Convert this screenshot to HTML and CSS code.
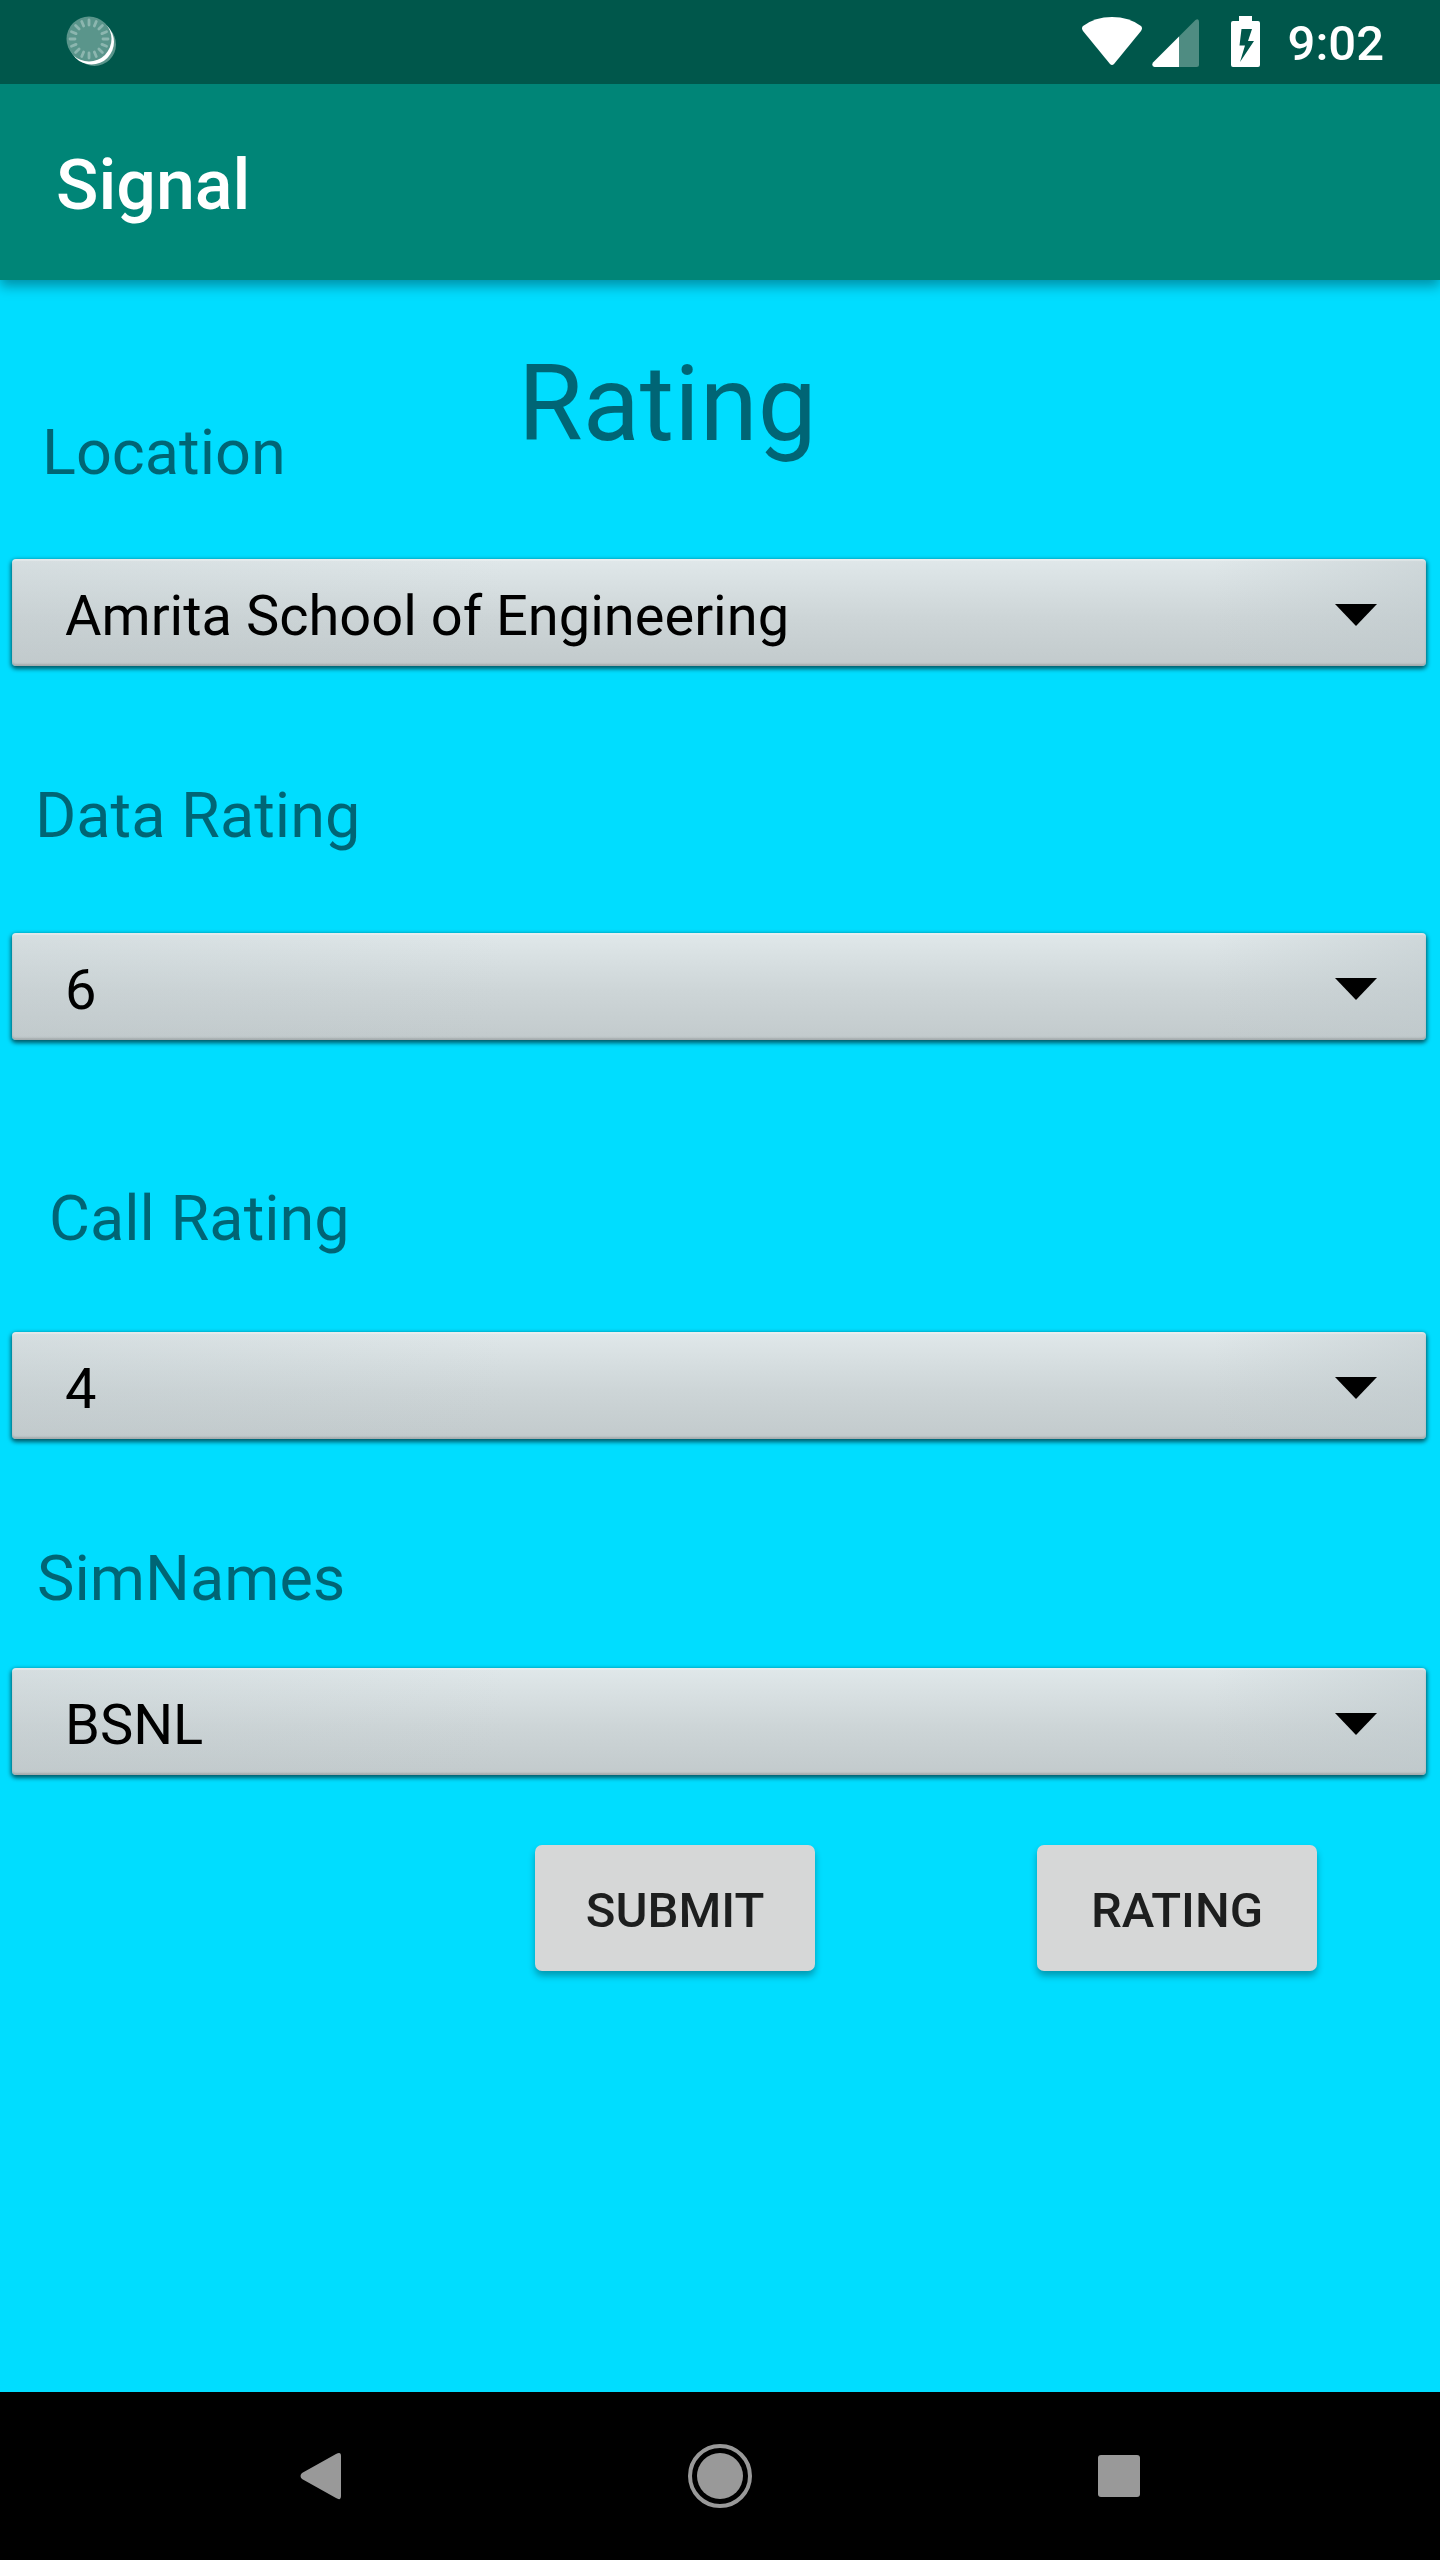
FILE: index.html
```html
<!DOCTYPE html>
<html lang="en">
<head>
<meta charset="utf-8">
<meta name="viewport" content="width=device-width, initial-scale=1">
<title>Signal</title>
<link rel="stylesheet" href="styles.css">
</head>
<body>
<div class="status-bar">
  <svg class="sync-icon" width="52" height="52" viewBox="0 0 52 52" aria-hidden="true">
    <circle cx="28.500" cy="28.500" r="21.500" fill="#5a958b"/>
    <circle cx="25.500" cy="26" r="22.500" fill="#fff"/>
    <circle cx="23" cy="23" r="22.500" fill="#5a958b"/>
    <g stroke="#8cb6af" stroke-width="2.800" stroke-linecap="round">
      <path id="tick" d="M23 4v5M23 37v5M4 23h5M37 23h5"/>
      <use href="#tick" transform="rotate(22.500 23 23)"/>
      <use href="#tick" transform="rotate(45 23 23)"/>
      <use href="#tick" transform="rotate(67.500 23 23)"/>
    </g>
  </svg>
  <div class="status-right">
    <svg class="wifi-icon" width="60" height="52" viewBox="0 0 60 52" aria-hidden="true">
      <path d="M1 10Q13 1 30 1T59 10Q61 12 59 15L32 48Q30 50 28 48L1 15Q-1 12 1 10Z" fill="#fff"/>
    </svg>
    <svg class="cell-icon" width="48" height="52" viewBox="0 0 48 52" aria-hidden="true">
      <path d="M27 20.500L43.500 4Q47 2 47 6V48.500Q47 51 44.500 51H27Z" fill="#4f8c82"/>
      <path d="M27 20.500V51H2.500Q-1 50 1 46.500Z" fill="#fff"/>
    </svg>
    <svg class="battery-icon" width="29" height="52" viewBox="0 0 29 52" aria-hidden="true">
      <path fill-rule="evenodd" d="M8 0H21V5H27Q29 5 29 7V49Q29 51 27 51H2Q0 51 0 49V7Q0 5 2 5H8ZM10.500 13L8.500 29.500H14L9 46L23 25H17L21 13Z" fill="#fff"/>
    </svg>
    <span class="clock">9:02</span>
  </div>
</div>

<header class="app-bar">
  <h1 class="app-title">Signal</h1>
</header>

<main class="content">
  <form class="rating-form">
    <div class="intro">
      <label class="label label-location" for="location">Location</label>
      <h2 class="heading">Rating</h2>
    </div>
    <div class="spinner">
      <select id="location"><option>Amrita School of Engineering</option></select>
      <svg class="arrow" width="42" height="22" viewBox="0 0 42 22" aria-hidden="true"><path d="M0 0H42L21 22Z"/></svg>
    </div>

    <label class="label label-data" for="data">Data Rating</label>
    <div class="spinner">
      <select id="data"><option>6</option></select>
      <svg class="arrow" width="42" height="22" viewBox="0 0 42 22" aria-hidden="true"><path d="M0 0H42L21 22Z"/></svg>
    </div>

    <label class="label label-call" for="call">Call Rating</label>
    <div class="spinner">
      <select id="call"><option>4</option></select>
      <svg class="arrow" width="42" height="22" viewBox="0 0 42 22" aria-hidden="true"><path d="M0 0H42L21 22Z"/></svg>
    </div>

    <label class="label label-sim" for="sim">SimNames</label>
    <div class="spinner">
      <select id="sim"><option>BSNL</option></select>
      <svg class="arrow" width="42" height="22" viewBox="0 0 42 22" aria-hidden="true"><path d="M0 0H42L21 22Z"/></svg>
    </div>

    <div class="actions">
      <button class="action" type="submit">SUBMIT</button>
      <button class="action" type="button">RATING</button>
    </div>
  </form>
</main>

<nav class="nav-bar">
  <button class="nav-button" type="button" aria-label="Back">
    <svg width="42" height="48" viewBox="0 0 42 48" aria-hidden="true"><path d="M2 21L36 2Q41 -1 41 4V44Q41 49 36 46L2 27Q-1 24 2 21Z" fill="#999"/></svg>
  </button>
  <button class="nav-button" type="button" aria-label="Home">
    <svg width="64" height="64" viewBox="0 0 64 64" aria-hidden="true"><circle cx="32" cy="32" r="30" fill="none" stroke="#999" stroke-width="4"/><circle cx="32" cy="32" r="23" fill="#999"/></svg>
  </button>
  <button class="nav-button" type="button" aria-label="Recent apps">
    <svg width="42" height="42" viewBox="0 0 42 42" aria-hidden="true"><rect width="42" height="42" rx="3" fill="#999"/></svg>
  </button>
</nav>
</body>
</html>
```
FILE: styles.css
```css
* {
  box-sizing: border-box;
}

body {
  margin: 0;
  min-height: 100vh;
  display: flex;
  flex-direction: column;
  background: #00ddff;
  font-family: Roboto, "Liberation Sans", sans-serif;
}

svg {
  display: block;
  flex: none;
}

h1,
h2 {
  margin: 0;
}

.status-bar {
  display: flex;
  justify-content: space-between;
  align-items: center;
  height: 84px;
  padding: 0 56px 0 66px;
  background: #00574b;
  color: #fff;
}

.status-right {
  display: flex;
  align-items: center;
}

.cell-icon {
  margin-left: 10px;
}

.battery-icon {
  margin: 0 28px 0 31px;
}

.clock {
  padding-top: 4px;
  font-size: 49px;
  font-weight: 500;
  line-height: 60px;
}

.app-bar {
  display: flex;
  align-items: center;
  min-height: 196px;
  padding: 6px 56px 0;
  background: #008577;
  box-shadow: 0 6px 12px rgba(0, 0, 0, 0.35);
  clip-path: inset(0 0 -24px 0);
}

.app-title {
  color: #fff;
  font-size: 70px;
  font-weight: 500;
  line-height: 84px;
}

.content {
  flex: 1;
  padding: 55px 14px 70px 12px;
}

.rating-form {
  display: flex;
  flex-direction: column;
}

.intro {
  display: grid;
  grid-template-columns: 506px 1fr;
  margin-bottom: 64px;
}

.heading {
  color: rgba(0, 0, 0, 0.54);
  font-size: 105px;
  font-weight: 400;
  line-height: 140px;
}

.label {
  color: rgba(0, 0, 0, 0.54);
  font-size: 63px;
  line-height: 84px;
}

.label-location {
  padding: 76px 0 0 30px;
}

.label-data {
  padding-left: 23px;
  margin: 108px 0 75px;
}

.label-call {
  padding-left: 37px;
  margin: 137px 0 71px;
}

.label-sim {
  padding-left: 25px;
  margin: 98px 0 47px;
}

.spinner {
  display: grid;
  align-items: center;
}

.spinner select,
.arrow {
  grid-area: 1 / 1;
}

.spinner select {
  appearance: none;
  width: 100%;
  height: 107px;
  margin: 0;
  padding: 6px 100px 0 53px;
  border: 0;
  border-radius: 4px;
  background:
    linear-gradient(90deg, rgba(190, 200, 203, 0.3), rgba(190, 200, 203, 0) 35%, rgba(190, 200, 203, 0) 85%, rgba(190, 200, 203, 0.5)),
    linear-gradient(#e0e8ea, #cdd5d7 55%, #c2cacc);
  box-shadow:
    inset 0 2px 1px rgba(255, 255, 255, 0.3),
    inset 0 -2px 2px rgba(0, 0, 0, 0.15),
    0 2px 4px 1px rgba(0, 0, 0, 0.6);
  color: #000;
  font-family: inherit;
  font-size: 56px;
  line-height: 72px;
}

.arrow {
  justify-self: end;
  margin-right: 49px;
  margin-top: 4px;
  pointer-events: none;
}

.actions {
  display: flex;
  justify-content: flex-end;
  gap: 222px;
  margin-top: 70px;
  padding-right: 109px;
}

.action {
  width: 280px;
  height: 126px;
  padding: 6px 0 0;
  border: 0;
  border-radius: 7px;
  background: #d6d7d7;
  box-shadow: 0 5px 7px rgba(0, 0, 0, 0.3);
  color: #1d1e1e;
  font-family: inherit;
  font-size: 49px;
  font-weight: 500;
  line-height: 60px;
}

.nav-bar {
  display: flex;
  justify-content: center;
  height: 168px;
  background: #000;
}

.nav-button {
  display: flex;
  align-items: center;
  justify-content: center;
  width: 399px;
  padding: 0;
  border: 0;
  background: none;
}
```
